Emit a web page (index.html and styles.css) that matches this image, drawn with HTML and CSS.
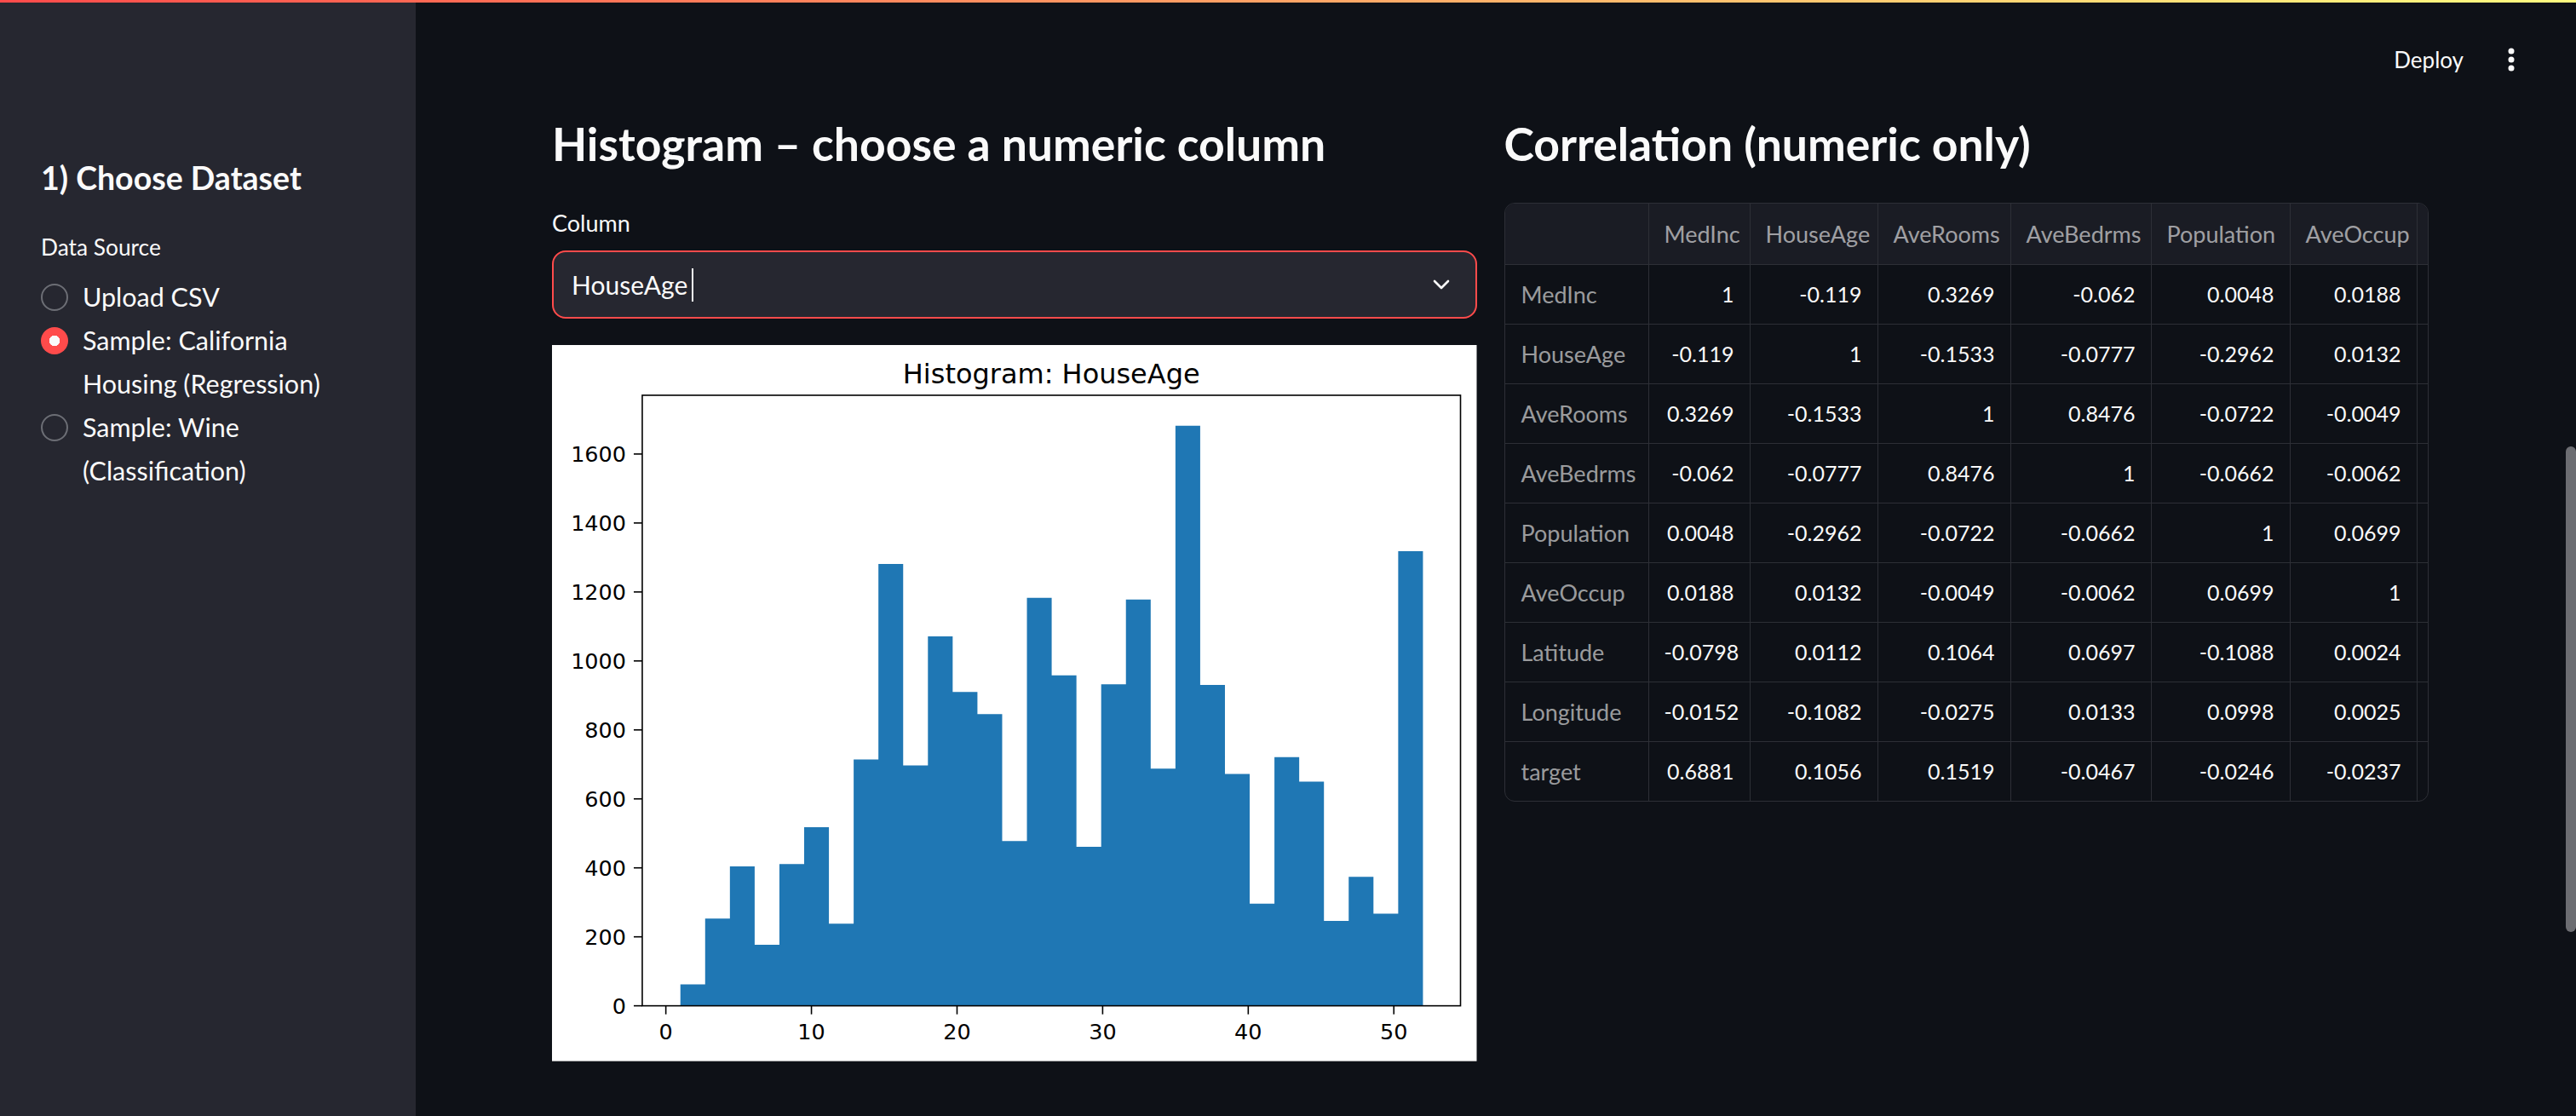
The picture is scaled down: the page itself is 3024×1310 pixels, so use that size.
FILE: index.html
```html
<!DOCTYPE html>
<html lang="en">
<head>
    <meta charset="UTF-8">
    <meta name="viewport" content="width=device-width, initial-scale=1.0">
    <title>Data Explorer</title>
    <link rel="stylesheet" href="styles.css">
</head>
<body>
    <div class="decoration"></div>
    <div class="app">
        <!-- sidebar -->
        <aside class="sidebar">
            <h2>1) Choose Dataset</h2>
            <div class="sidebar-label">Data Source</div>
            <div class="radio-group">
                <label class="radio"><span class="dot"></span><span>Upload CSV</span></label>
                <label class="radio checked"><span class="dot"></span><span>Sample: California Housing (Regression)</span></label>
                <label class="radio"><span class="dot"></span><span>Sample: Wine (Classification)</span></label>
            </div>
        </aside>

        <main class="main">
            <header class="topbar">
                <button class="deploy">Deploy</button>
                <button class="menu" aria-label="Main menu">
                    <svg width="8" height="28" viewBox="0 0 8 28"><circle cx="4" cy="4" r="3.5"/><circle cx="4" cy="14" r="3.5"/><circle cx="4" cy="24" r="3.5"/></svg>
                </button>
            </header>

            <div class="columns">
                <!-- histogram column -->
                <section class="col">
                    <h3>Histogram – choose a numeric column</h3>
                    <div class="field-label">Column</div>
                    <div class="select">
                        <span class="value">HouseAge</span><span class="caret"></span>
                        <svg class="chevron" width="20" height="12" viewBox="0 0 20 12"><polyline points="2,2 10,10 18,2"/></svg>
                    </div>
                    <svg class="chart" viewBox="0 0 1086 841">
                        <rect x="0" y="0" width="1086" height="841" fill="#fff"/>
                        <text class="title" x="586.5" y="45" text-anchor="middle">Histogram: HouseAge</text>
                        <path class="bars" d="M150.8 776 V750.9 H179.87 V673.5 H208.94 V612.4 H238.01 V704.3 H267.08 V609.5 H296.15 V566.2 H325.22 V679.6 H354.29 V486.8 H383.36 V257.2 H412.43 V493.7 H441.5 V342.2 H470.57 V407.4 H499.64 V433.4 H528.71 V582.4 H557.78 V296.9 H586.85 V388 H615.92 V589.3 H644.99 V398.5 H674.06 V298.9 H703.13 V497.4 H732.2 V94.8 H761.27 V399.3 H790.34 V503.8 H819.41 V656.1 H848.48 V484 H877.55 V512.7 H906.62 V676.4 H935.69 V624.5 H964.76 V667.9 H993.83 V242.2 H1022.9 V776 Z"/>
                        <rect class="axes" x="106" y="59" width="961" height="717"/>
                        <g class="ticks">
                            <line x1="96" y1="776" x2="106" y2="776"/>
                            <line x1="96" y1="695" x2="106" y2="695"/>
                            <line x1="96" y1="614" x2="106" y2="614"/>
                            <line x1="96" y1="533" x2="106" y2="533"/>
                            <line x1="96" y1="452" x2="106" y2="452"/>
                            <line x1="96" y1="371" x2="106" y2="371"/>
                            <line x1="96" y1="290" x2="106" y2="290"/>
                            <line x1="96" y1="209" x2="106" y2="209"/>
                            <line x1="96" y1="128" x2="106" y2="128"/>
                            <line x1="133.7" y1="776" x2="133.7" y2="786"/>
                            <line x1="304.7" y1="776" x2="304.7" y2="786"/>
                            <line x1="475.7" y1="776" x2="475.7" y2="786"/>
                            <line x1="646.7" y1="776" x2="646.7" y2="786"/>
                            <line x1="817.7" y1="776" x2="817.7" y2="786"/>
                            <line x1="988.7" y1="776" x2="988.7" y2="786"/>
                        </g>
                        <g class="tick-labels" text-anchor="end">
                            <text x="87" y="785">0</text>
                            <text x="87" y="704">200</text>
                            <text x="87" y="623">400</text>
                            <text x="87" y="542">600</text>
                            <text x="87" y="461">800</text>
                            <text x="87" y="380">1000</text>
                            <text x="87" y="299">1200</text>
                            <text x="87" y="218">1400</text>
                            <text x="87" y="137">1600</text>
                        </g>
                        <g class="tick-labels" text-anchor="middle">
                            <text x="133.7" y="815">0</text>
                            <text x="304.7" y="815">10</text>
                            <text x="475.7" y="815">20</text>
                            <text x="646.7" y="815">30</text>
                            <text x="817.7" y="815">40</text>
                            <text x="988.7" y="815">50</text>
                        </g>
                    </svg>
                </section>

                <!-- correlation column -->
                <section class="col">
                    <h3>Correlation (numeric only)</h3>
                    <div class="grid-wrap">
                        <table class="grid">
                            <colgroup>
                                <col style="width:169px"><col style="width:119px"><col style="width:150px"><col style="width:156px"><col style="width:165px"><col style="width:163px"><col style="width:149px"><col>
                            </colgroup>
                            <thead>
                                <tr><th></th><th>MedInc</th><th>HouseAge</th><th>AveRooms</th><th>AveBedrms</th><th>Population</th><th>AveOccup</th><th></th></tr>
                            </thead>
                            <tbody>
                                <tr><td>MedInc</td><td>1</td><td>-0.119</td><td>0.3269</td><td>-0.062</td><td>0.0048</td><td>0.0188</td><td></td></tr>
                                <tr><td>HouseAge</td><td>-0.119</td><td>1</td><td>-0.1533</td><td>-0.0777</td><td>-0.2962</td><td>0.0132</td><td></td></tr>
                                <tr><td>AveRooms</td><td>0.3269</td><td>-0.1533</td><td>1</td><td>0.8476</td><td>-0.0722</td><td>-0.0049</td><td></td></tr>
                                <tr><td>AveBedrms</td><td>-0.062</td><td>-0.0777</td><td>0.8476</td><td>1</td><td>-0.0662</td><td>-0.0062</td><td></td></tr>
                                <tr><td>Population</td><td>0.0048</td><td>-0.2962</td><td>-0.0722</td><td>-0.0662</td><td>1</td><td>0.0699</td><td></td></tr>
                                <tr><td>AveOccup</td><td>0.0188</td><td>0.0132</td><td>-0.0049</td><td>-0.0062</td><td>0.0699</td><td>1</td><td></td></tr>
                                <tr><td>Latitude</td><td>-0.0798</td><td>0.0112</td><td>0.1064</td><td>0.0697</td><td>-0.1088</td><td>0.0024</td><td></td></tr>
                                <tr><td>Longitude</td><td>-0.0152</td><td>-0.1082</td><td>-0.0275</td><td>0.0133</td><td>0.0998</td><td>0.0025</td><td></td></tr>
                                <tr><td>target</td><td>0.6881</td><td>0.1056</td><td>0.1519</td><td>-0.0467</td><td>-0.0246</td><td>-0.0237</td><td></td></tr>
                            </tbody>
                        </table>
                    </div>
                </section>
            </div>

            <div class="scroll-thumb"></div>
        </main>
    </div>
</body>
</html>
```

FILE: styles.css
```css
body {
    margin: 0;
    height: 1310px;
    overflow: hidden;
    background-color: #0e1117;
    color: #fafafa;
    font-family: Lato, "Open Sans", sans-serif;
}

.decoration {
    height: 3px;
    background: linear-gradient(90deg, #ff4b4b, #fffd80);
}

.app {
    display: flex;
    height: 1307px;
}

/* sidebar */
.sidebar {
    width: 488px;
    flex-shrink: 0;
    box-sizing: border-box;
    padding: 183px 48px 0;
    background-color: #262730;
}

.sidebar h2 {
    margin: 0;
    font-size: 37.5px;
    font-weight: 700;
    line-height: 46px;
}

.sidebar-label {
    margin-top: 42px;
    font-size: 26.3px;
    line-height: 32px;
}

.radio-group {
    margin-top: 17px;
}

.radio {
    display: flex;
    align-items: flex-start;
    gap: 17px;
    font-size: 30.5px;
    line-height: 51px;
}

.radio .dot {
    flex-shrink: 0;
    width: 32px;
    height: 32px;
    margin-top: 9.5px;
    box-sizing: border-box;
    border: 2px solid #6c6e75;
    border-radius: 50%;
}

.radio.checked .dot {
    border: none;
    background: radial-gradient(circle, #fafafa 0 6px, #ff4b4b 6.5px);
}

/* main area */
.main {
    flex: 1;
    position: relative;
}

.topbar {
    height: 134px;
    display: flex;
    justify-content: flex-end;
    align-items: center;
    gap: 20px;
    padding-right: 56px;
}

.topbar button {
    background: none;
    border: none;
    color: #fafafa;
    font-family: inherit;
    cursor: pointer;
}

.deploy {
    padding: 0 16px;
    font-size: 26px;
}

.menu {
    width: 40px;
    height: 40px;
    padding: 0;
    display: flex;
    align-items: center;
    justify-content: center;
}

.menu svg {
    fill: #fafafa;
}

.columns {
    display: flex;
    gap: 32px;
    padding: 0 173px 0 160px;
}

.col {
    flex: 1;
    min-width: 0;
}

.col h3 {
    margin: 0;
    font-size: 53.5px;
    font-weight: 700;
    line-height: 63px;
}

.field-label {
    margin-top: 46px;
    font-size: 27px;
    line-height: 31px;
}

.select {
    margin-top: 17px;
    height: 80px;
    box-sizing: border-box;
    display: flex;
    align-items: center;
    padding: 0 30px 0 21px;
    background-color: #262730;
    border: 2px solid #ff4b4b;
    border-radius: 16px;
    font-size: 30px;
}

.select .caret {
    width: 2px;
    height: 39px;
    margin-left: 5px;
    background-color: #fafafa;
}

.chevron {
    margin-left: auto;
    fill: none;
    stroke: #fafafa;
    stroke-width: 2.6;
    stroke-linecap: round;
    stroke-linejoin: round;
}

/* histogram */
.chart {
    display: block;
    width: 100%;
    margin-top: 31px;
    font-family: "DejaVu Sans", sans-serif;
}

.chart .title {
    font-size: 32px;
    fill: #000;
}

.chart .bars {
    fill: #1f77b4;
}

.chart .axes {
    fill: none;
    stroke: #000;
    stroke-width: 1.6;
}

.chart .ticks line {
    stroke: #000;
    stroke-width: 1.6;
}

.chart .tick-labels {
    font-size: 25.5px;
    fill: #000;
}

/* correlation grid */
.grid-wrap {
    margin-top: 38px;
    border: 1px solid #2d2f36;
    border-radius: 12px;
    overflow: hidden;
}

.grid {
    width: 100%;
    table-layout: fixed;
    border-spacing: 0;
    font-size: 25px;
}

.grid th, .grid td {
    padding: 0 18px;
    border-right: 1px solid #2d2f36;
    border-bottom: 1px solid #2d2f36;
    text-align: right;
    white-space: nowrap;
    overflow: hidden;
}

.grid th {
    line-height: 71px;
    font-size: 27px;
    font-weight: 400;
    color: rgba(250, 250, 250, 0.6);
    background-color: #1a1c24;
}

.grid td {
    line-height: 69px;
}

.grid td:first-child {
    padding-left: 19px;
    text-align: left;
    font-size: 27px;
    color: rgba(250, 250, 250, 0.6);
}

.grid th:last-child, .grid td:last-child {
    border-right: none;
}

.grid tbody tr:last-child td {
    border-bottom: none;
}

.scroll-thumb {
    position: absolute;
    right: 0;
    top: 521px;
    width: 12px;
    height: 570px;
    border-radius: 6px;
    background-color: #6c6d72;
}
```
